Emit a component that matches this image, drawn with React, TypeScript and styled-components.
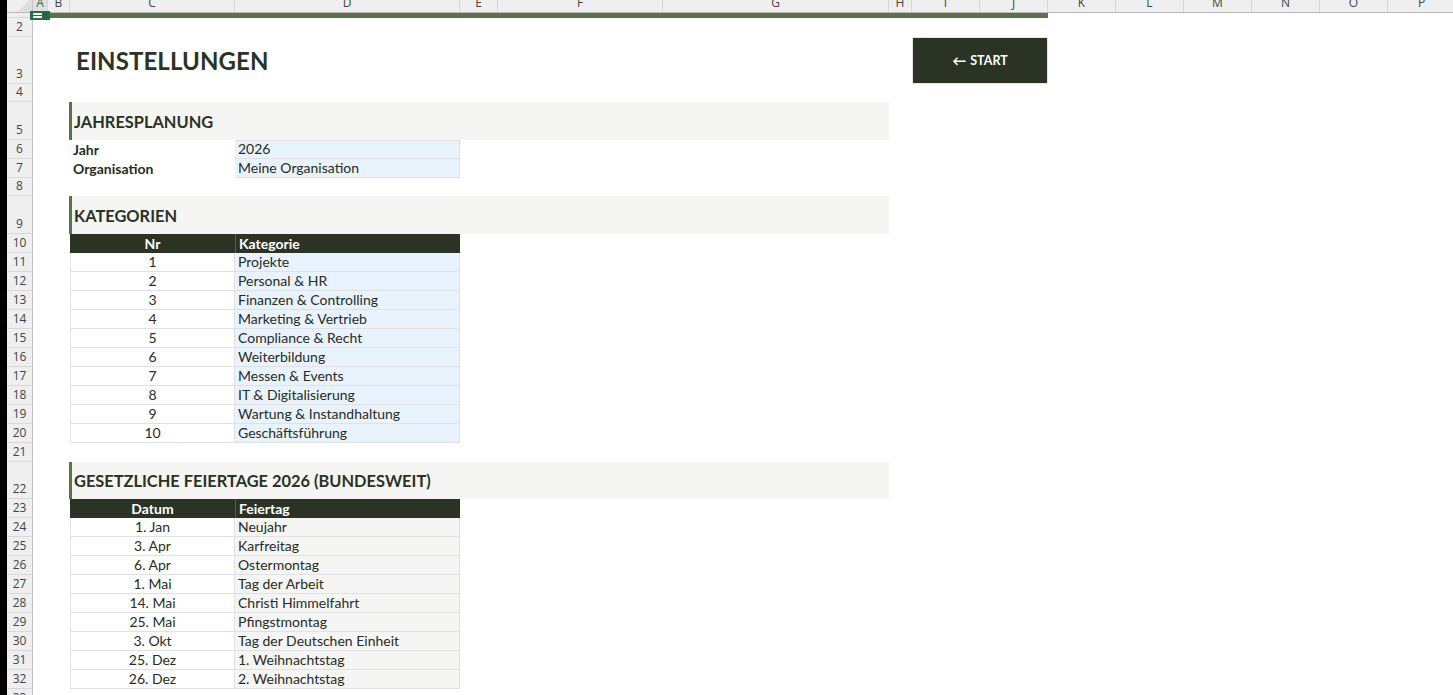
import React from 'react'
import styled, { createGlobalStyle } from 'styled-components'

const GlobalStyle = createGlobalStyle`
  html, body {
    margin: 0;
    padding: 0;
    background: #ffffff;
  }
  body {
    font-family: Lato, "Liberation Sans", sans-serif;
    overflow: hidden;
  }
`

const DARK = '#2b3324'
const ACCENT = '#5b7149'
const BAND = '#f5f5f3'
const BLUE = '#e9f3fd'
const GRAY = '#f5f5f4'
const LINE = '#dfe1e4'

const colLetters = ['A', 'B', 'C', 'D', 'E', 'F', 'G', 'H', 'I', 'J', 'K', 'L', 'M', 'N', 'O', 'P']
const colWidths = [15, 22, 165, 225, 38, 165, 226, 23, 68, 68, 68, 68, 68, 68, 68, 68]
const gridTemplate = `26px ${colWidths.map(w => `${w}px`).join(' ')} 1fr`

const categories = [
  'Projekte',
  'Personal & HR',
  'Finanzen & Controlling',
  'Marketing & Vertrieb',
  'Compliance & Recht',
  'Weiterbildung',
  'Messen & Events',
  'IT & Digitalisierung',
  'Wartung & Instandhaltung',
  'Geschäftsführung',
]

const holidays = [
  { date: '1. Jan', name: 'Neujahr' },
  { date: '3. Apr', name: 'Karfreitag' },
  { date: '6. Apr', name: 'Ostermontag' },
  { date: '1. Mai', name: 'Tag der Arbeit' },
  { date: '14. Mai', name: 'Christi Himmelfahrt' },
  { date: '25. Mai', name: 'Pfingstmontag' },
  { date: '3. Okt', name: 'Tag der Deutschen Einheit' },
  { date: '25. Dez', name: '1. Weihnachtstag' },
  { date: '26. Dez', name: '2. Weihnachtstag' },
]

const Window = styled.div`
  display: flex;
  width: 1453px;
  height: 695px;
  overflow: hidden;
  background: #ffffff;
`

const LeftEdge = styled.div`
  width: 7px;
  flex-shrink: 0;
  background: #000000;
`

const Sheet = styled.div`
  position: relative;
  flex: 1;
  display: flex;
  flex-direction: column;
  overflow: hidden;
`

const HeaderRow = styled.div`
  display: grid;
  grid-template-columns: ${gridTemplate};
  height: 12px;
  border-bottom: 1px solid #b9b9b9;
  background: #efefef;
  flex-shrink: 0;
`

const Corner = styled.div`
  border-right: 1px solid #c4c4c4;
  background: linear-gradient(135deg, #efefef 60%, #dedede 60%);
`

const ColHead = styled.div<{ $active?: boolean }>`
  display: flex;
  justify-content: center;
  align-items: flex-start;
  overflow: hidden;
  border-right: 1px solid #d6d6d6;
  background: ${p => (p.$active ? '#e0e0e0' : '#efefef')};
  color: ${p => (p.$active ? '#217346' : '#444444')};
  font-family: "Open Sans", "Liberation Sans", sans-serif;
  font-size: 12px;
  line-height: 6px;
`

const Row = styled.div<{ $h: number }>`
  display: grid;
  grid-template-columns: ${gridTemplate};
  height: ${p => p.$h}px;
  flex-shrink: 0;
`

const RowHead = styled.div`
  grid-column: 1;
  display: flex;
  align-items: flex-end;
  justify-content: center;
  box-sizing: border-box;
  background: #efefef;
  border-right: 1px solid #c4c4c4;
  border-bottom: 1px solid #d8d8d8;
  color: #444444;
  font-family: "Open Sans", "Liberation Sans", sans-serif;
  font-size: 12px;
  line-height: 18px;
  overflow: hidden;
`

const AccentBar = styled.div`
  grid-column: 2 / 12;
  background: ${ACCENT};
`

const Title = styled.h1`
  grid-column: 4 / 8;
  margin: 0;
  display: flex;
  align-items: center;
  padding-left: 6px;
  font-size: 24px;
  font-weight: 700;
  color: ${DARK};
  letter-spacing: 0.1px;
`

const StartButton = styled.button`
  grid-column: 10 / 12;
  display: flex;
  align-items: center;
  justify-content: center;
  gap: 4px;
  margin: 0;
  padding: 0;
  box-sizing: border-box;
  border: 1px solid #e4e4e4;
  background: ${DARK};
  color: #ffffff;
  font-family: Lato, "Liberation Sans", sans-serif;
  font-size: 12.5px;
  font-weight: 700;
  cursor: pointer;
`

const Arrow = styled.span`
  font-size: 14px;
  font-weight: 700;
  line-height: 1;
`

const SectionBand = styled.h2`
  grid-column: 4 / 9;
  margin: 0 0 0 -1px;
  display: flex;
  align-items: center;
  padding-left: 2px;
  border-left: 3px solid ${ACCENT};
  background: ${BAND};
  font-size: 16.4px;
  font-weight: 700;
  color: ${DARK};
`

const Cell = styled.div`
  display: flex;
  align-items: flex-end;
  box-sizing: border-box;
  padding: 0 3px 1px;
  font-size: 14px;
  line-height: 16px;
  color: #272c24;
  white-space: nowrap;
  overflow: hidden;
`

const LabelCell = styled(Cell)`
  grid-column: 4;
  font-weight: 700;
`

const NumCell = styled(Cell)`
  grid-column: 4;
  justify-content: center;
  background: #ffffff;
  border-left: 1px solid ${LINE};
  border-right: 1px solid ${LINE};
  border-bottom: 1px solid ${LINE};
`

const ValueCell = styled(Cell)<{ $fill: 'blue' | 'gray'; $top?: boolean }>`
  grid-column: 5;
  background: ${p => (p.$fill === 'blue' ? BLUE : GRAY)};
  border-right: 1px solid ${LINE};
  border-bottom: 1px solid ${LINE};
  border-top: ${p => (p.$top ? `1px solid ${LINE}` : 'none')};
`

const HeadCell = styled(Cell)<{ $col: number; $center?: boolean }>`
  grid-column: ${p => p.$col};
  justify-content: ${p => (p.$center ? 'center' : 'flex-start')};
  background: ${DARK};
  color: #ffffff;
  font-weight: 700;
  border-left: ${p => (p.$center ? 'none' : '1px solid #55604c')};
`

const SelectionMark = styled.svg`
  position: absolute;
  left: 23px;
  top: 11px;
`

const Blank = ({ n, h = 19 }: { n: number; h?: number }) => (
  <Row $h={h}>
    <RowHead>{n}</RowHead>
  </Row>
)

export default function App() {
  return (
    <>
      <GlobalStyle />
      <Window>
        <LeftEdge />
        <Sheet>
          <HeaderRow>
            <Corner />
            {colLetters.map(l => (
              <ColHead key={l} $active={l === 'A'}>
                {l}
              </ColHead>
            ))}
          </HeaderRow>

          <Row $h={5}>
            <RowHead />
            <AccentBar />
          </Row>
          <Blank n={2} />
          <Row $h={47}>
            <RowHead>3</RowHead>
            <Title>EINSTELLUNGEN</Title>
            <StartButton>
              <Arrow>←</Arrow>
              <span>START</span>
            </StartButton>
          </Row>
          <Blank n={4} h={18} />

          <Row $h={38}>
            <RowHead>5</RowHead>
            <SectionBand>JAHRESPLANUNG</SectionBand>
          </Row>
          <Row $h={19}>
            <RowHead>6</RowHead>
            <LabelCell>Jahr</LabelCell>
            <ValueCell $fill="blue" $top>2026</ValueCell>
          </Row>
          <Row $h={19}>
            <RowHead>7</RowHead>
            <LabelCell>Organisation</LabelCell>
            <ValueCell $fill="blue">Meine Organisation</ValueCell>
          </Row>
          <Blank n={8} h={18} />

          <Row $h={38}>
            <RowHead>9</RowHead>
            <SectionBand>KATEGORIEN</SectionBand>
          </Row>
          <Row $h={19}>
            <RowHead>10</RowHead>
            <HeadCell $col={4} $center>Nr</HeadCell>
            <HeadCell $col={5}>Kategorie</HeadCell>
          </Row>
          {categories.map((c, i) => (
            <Row $h={19} key={c}>
              <RowHead>{11 + i}</RowHead>
              <NumCell>{i + 1}</NumCell>
              <ValueCell $fill="blue">{c}</ValueCell>
            </Row>
          ))}
          <Blank n={21} />

          <Row $h={37}>
            <RowHead>22</RowHead>
            <SectionBand>GESETZLICHE FEIERTAGE 2026 (BUNDESWEIT)</SectionBand>
          </Row>
          <Row $h={19}>
            <RowHead>23</RowHead>
            <HeadCell $col={4} $center>Datum</HeadCell>
            <HeadCell $col={5}>Feiertag</HeadCell>
          </Row>
          {holidays.map((h, i) => (
            <Row $h={19} key={h.name}>
              <RowHead>{24 + i}</RowHead>
              <NumCell>{h.date}</NumCell>
              <ValueCell $fill="gray">{h.name}</ValueCell>
            </Row>
          ))}
          <Blank n={33} />

          <SelectionMark width="20" height="9" viewBox="0 0 20 9">
            <rect x="0" y="0" width="20" height="9" fill="#217346" />
            <rect x="3" y="2" width="9" height="5" rx="1" fill="#ffffff" />
            <rect x="3" y="4" width="9" height="1" fill="#217346" />
            <rect x="13" y="1" width="7" height="8" fill="#1e6b40" />
          </SelectionMark>
        </Sheet>
      </Window>
    </>
  )
}
